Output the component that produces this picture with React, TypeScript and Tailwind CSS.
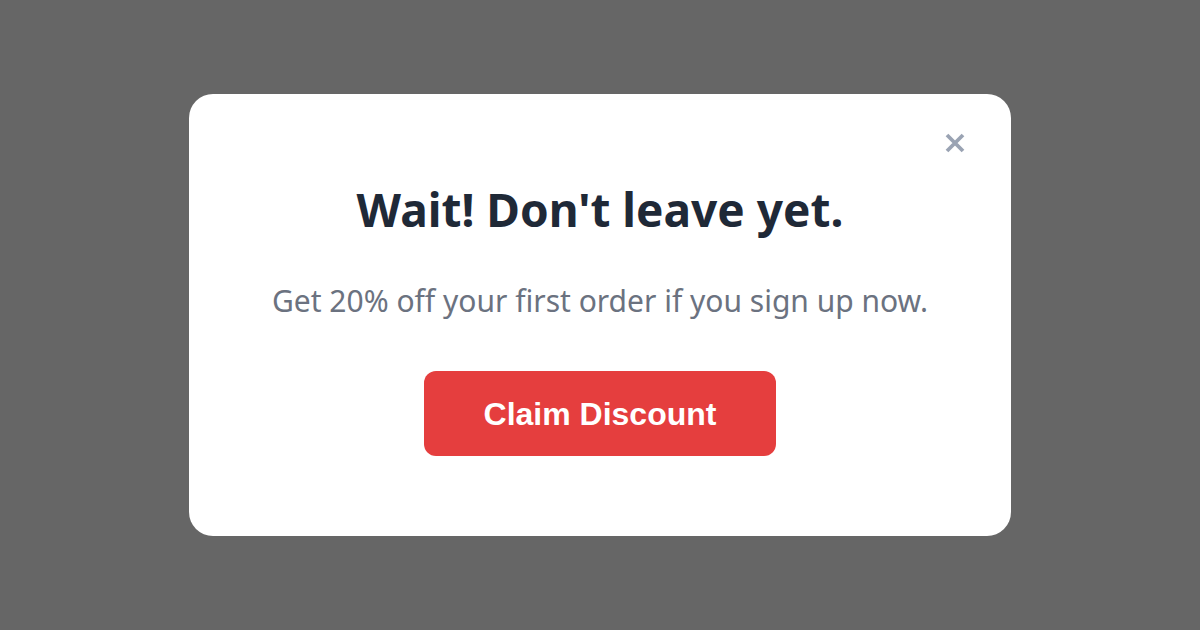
export default function App() {
  return (
    <div className="w-[1200px] h-[630px] bg-[#666666] flex items-center justify-center">
      <div className="relative w-[822px] h-[442px] bg-white rounded-[24px] flex flex-col items-center pt-[85px]">
        <button className="absolute right-[44px] top-[37px] w-[24px] h-[24px] flex items-center justify-center">
          <svg width="22" height="22" viewBox="0 0 22 22" fill="none">
            <path d="M3 3L19 19M19 3L3 19" stroke="#9aa3b3" strokeWidth="3.8" />
          </svg>
        </button>
        <h1 className="font-['Noto_Sans',sans-serif] font-bold text-[46px] leading-[60px] text-[#1f2937]">
          Wait! Don't leave yet.
        </h1>
        <p className="mt-[40px] font-['Noto_Sans',sans-serif] text-[30px] leading-[44px] text-[#6b7280]">
          Get 20% off your first order if you sign up now.
        </p>
        <button className="mt-[48px] bg-[#e53e3e] rounded-[12px] px-[60px] h-[85px] font-['Liberation_Sans',Arial,sans-serif] font-bold text-[32px] text-white">
          Claim Discount
        </button>
      </div>
    </div>
  )
}
